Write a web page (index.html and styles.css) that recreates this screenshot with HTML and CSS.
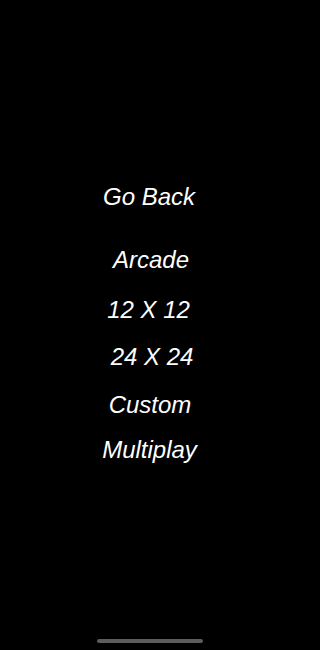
FILE: index.html
```html
<!DOCTYPE html>
<html>
<head>
<meta charset="utf-8">
<link rel="stylesheet" href="styles.css">
</head>
<body>
<div class="screen">
  <nav class="menu">
    <div class="item back">Go Back</div>
    <div class="item arcade">Arcade</div>
    <div class="item twelve">12 X 12</div>
    <div class="item twentyfour">24 X 24</div>
    <div class="item custom">Custom</div>
    <div class="item multi">Multiplay</div>
  </nav>
  <div class="home-indicator"></div>
</div>
</body>
</html>
```
FILE: styles.css
```css
html, body {
  margin: 0;
  padding: 0;
  background: #000;
}
.screen {
  width: 300px;
  height: 650px;
  display: flex;
  flex-direction: column;
  align-items: center;
  background: #000;
  font-family: "Liberation Sans", Arial, sans-serif;
  font-style: italic;
  color: #fff;
}
.menu {
  display: flex;
  flex-direction: column;
  align-items: center;
  width: 100%;
  padding-top: 183px;
}
.item {
  font-size: 24px;
  line-height: 28px;
  height: 28px;
  white-space: pre;
}
.back { margin-left: -2px; }
.arcade { margin-top: 35px; margin-left: 2px; }
.twelve { margin-top: 22px; margin-left: -3px; }
.twentyfour { margin-top: 19px; margin-left: 4px; }
.custom { margin-top: 20px; }
.multi { margin-top: 17px; margin-left: -1px; }
.home-indicator {
  margin-top: auto;
  margin-bottom: 7px;
  width: 106px;
  height: 4px;
  border-radius: 2px;
  background: #5c5c5c;
}
```
